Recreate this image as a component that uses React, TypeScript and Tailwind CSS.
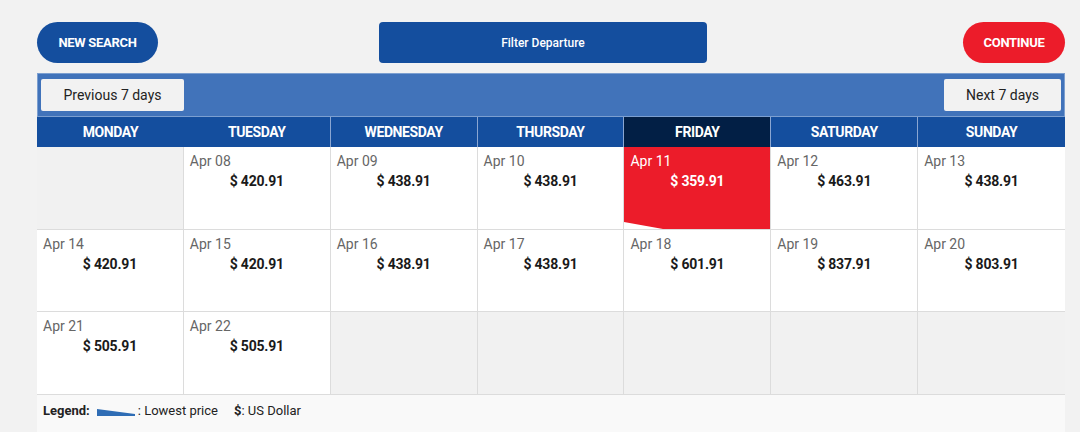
import React from "react";

type Cell = { date?: string; price?: string; selected?: boolean };

const rows: Cell[][] = [
  [
    {},
    { date: "Apr 08", price: "$ 420.91" },
    { date: "Apr 09", price: "$ 438.91" },
    { date: "Apr 10", price: "$ 438.91" },
    { date: "Apr 11", price: "$ 359.91", selected: true },
    { date: "Apr 12", price: "$ 463.91" },
    { date: "Apr 13", price: "$ 438.91" },
  ],
  [
    { date: "Apr 14", price: "$ 420.91" },
    { date: "Apr 15", price: "$ 420.91" },
    { date: "Apr 16", price: "$ 438.91" },
    { date: "Apr 17", price: "$ 438.91" },
    { date: "Apr 18", price: "$ 601.91" },
    { date: "Apr 19", price: "$ 837.91" },
    { date: "Apr 20", price: "$ 803.91" },
  ],
  [
    { date: "Apr 21", price: "$ 505.91" },
    { date: "Apr 22", price: "$ 505.91" },
    {},
    {},
    {},
    {},
    {},
  ],
];

const days = ["MONDAY", "TUESDAY", "WEDNESDAY", "THURSDAY", "FRIDAY", "SATURDAY", "SUNDAY"];

export default function App() {
  return (
    <div
      className="w-[1080px] h-[432px] bg-[#f2f2f2] overflow-hidden"
      style={{ fontFamily: "Roboto, 'Liberation Sans', sans-serif" }}
    >
      <div className="mx-[37px] w-[1028px] pt-[22px]">
        <div className="flex items-center h-[41px]">
          <button className="h-[41px] w-[121px] rounded-full bg-[#144e9e] text-white text-[13px] font-bold tracking-[-0.3px]">
            NEW SEARCH
          </button>
          <button className="ml-[221px] h-[41px] w-[328px] rounded-[4px] bg-[#144e9e] text-white text-[12px] font-medium">
            Filter Departure
          </button>
          <button className="ml-auto h-[41px] w-[102px] rounded-full bg-[#ec1c2a] text-white text-[13px] font-bold tracking-[-0.3px]">
            CONTINUE
          </button>
        </div>

        <div className="mt-[10px] h-[44px] bg-[#4173ba] border border-[#7c9fd0] flex items-center justify-between px-[3px]">
          <button className="h-[32px] w-[143px] rounded-[2px] bg-[#f2f2f2] text-[#222] text-[14px]">
            Previous 7 days
          </button>
          <button className="h-[32px] w-[117px] rounded-[2px] bg-[#f2f2f2] text-[#222] text-[14px]">
            Next 7 days
          </button>
        </div>

        <div className="grid grid-cols-7 h-[30px] bg-[#144e9e]">
          {days.map((d, i) => (
            <div
              key={d}
              className={
                "flex items-center justify-center text-white text-[14px] font-bold tracking-[-0.4px] " +
                (d === "FRIDAY" ? "bg-[#021f45] " : "") +
                (i >= 1 && i <= 5 ? "border-r border-[#8aa6d2]" : "")
              }
            >
              {d}
            </div>
          ))}
        </div>

        <div className="grid grid-cols-7">
          {rows.flatMap((row, r) =>
            row.map((c, i) => {
              const base = "relative h-[82.7px] border-b border-[#dcdcdc] " + (i < 6 ? "border-r " : "");
              if (!c.date) {
                return <div key={`${r}-${i}`} className={base + "bg-[#f1f1f1]"} />;
              }
              if (c.selected) {
                return (
                  <div key={`${r}-${i}`} className={base + "bg-[#ec1c2a] overflow-hidden"}>
                    <div className="pl-[6px] pt-[5px] leading-[18px] text-[14px] text-white">{c.date}</div>
                    <div className="text-center leading-[22px] text-[14px] font-bold text-white tracking-[-0.2px]">{c.price}</div>
                    <svg className="absolute left-0 bottom-0" width="39" height="7" viewBox="0 0 39 7">
                      <polygon points="0,0 39,7 0,7" fill="#ffffff" />
                    </svg>
                  </div>
                );
              }
              return (
                <div key={`${r}-${i}`} className={base + "bg-white"}>
                  <div className="pl-[6px] pt-[5px] leading-[18px] text-[14px] text-[#666]">{c.date}</div>
                  <div className="text-center leading-[22px] text-[14px] font-bold text-[#1a1a1a] tracking-[-0.2px]">{c.price}</div>
                </div>
              );
            })
          )}
        </div>

        <div className="h-[40px] bg-[#f9f9f9] flex items-start pt-[7px] leading-[18px] pl-[6px] text-[13px] text-[#222]">
          <span className="font-bold">Legend:</span>
          <svg className="ml-[7px] mr-[3px] mt-[7px]" width="38" height="7" viewBox="0 0 38 7">
            <polygon points="0,0 38,5 38,7 0,7" fill="#2f6db5" />
          </svg>
          <span>: Lowest price</span>
          <span className="ml-[16px] font-bold">$</span>
          <span>: US Dollar</span>
        </div>
      </div>
    </div>
  );
}
